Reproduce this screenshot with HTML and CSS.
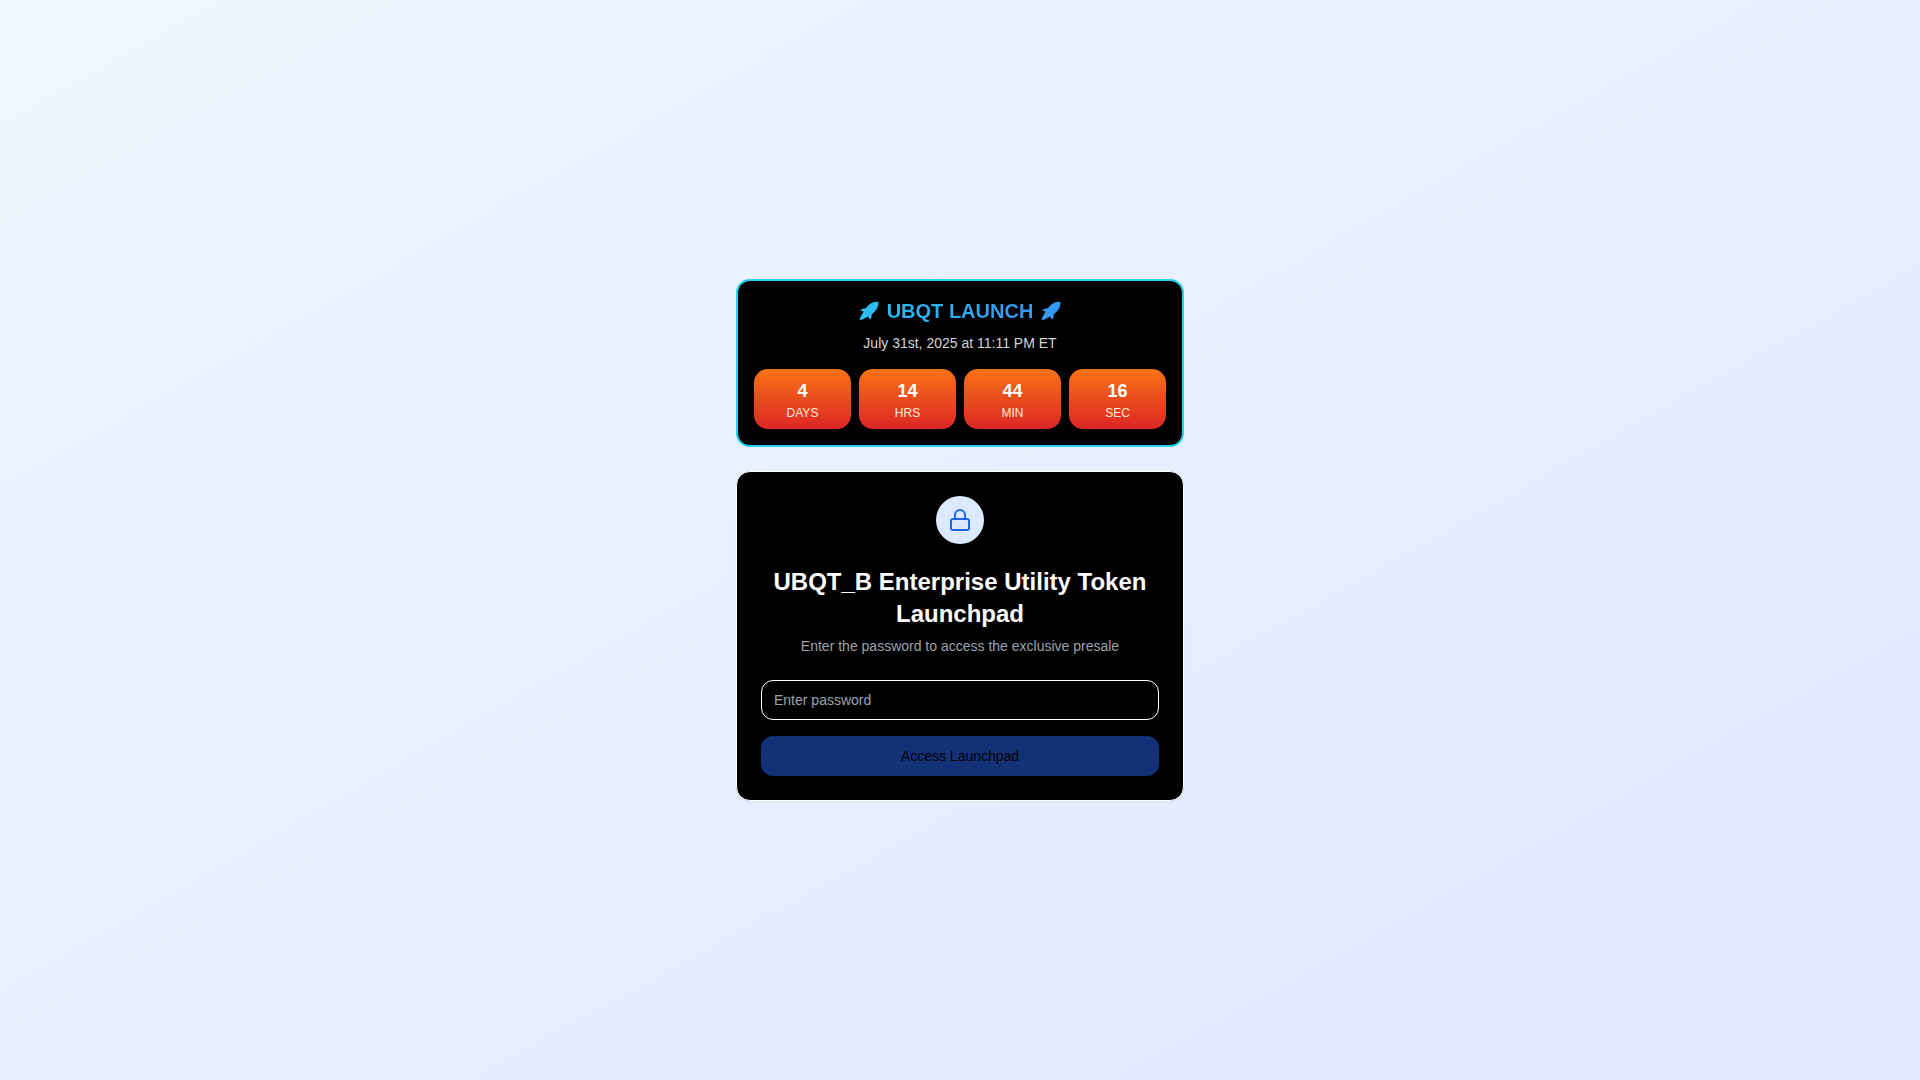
FILE: index.html
```html
<!DOCTYPE html>
<html lang="en">
<head>
    <meta charset="UTF-8">
    <meta name="viewport" content="width=device-width, initial-scale=1.0">
    <title>UBQT_B Launchpad</title>
    <link rel="stylesheet" href="styles.css">
</head>
<body>
    <main class="page">
        <section class="countdown">
            <div class="countdown-heading">
                <svg class="rocket rocket-left" width="20" height="20" viewBox="0 0 20 20" fill="currentColor" aria-hidden="true">
                    <path d="M19.4 .8C15.5 .6 12.2 1.6 9.4 4.2L6.8 7.2C5 7 3 7.8 1.2 9.6L4.6 10.4L3.4 12.8C2 14.6 1 16.6 .6 19.2C3 18.8 5 18 6.8 16.8L9.2 15.6L10.8 18.8C12.4 17 13 15.2 12.6 13.4L15.8 10.6C18.4 8 19.6 4.6 19.4 .8Z"/>
                </svg>
                <h2 class="countdown-title">UBQT LAUNCH</h2>
                <svg class="rocket rocket-right" width="20" height="20" viewBox="0 0 20 20" fill="currentColor" aria-hidden="true">
                    <path d="M19.4 .8C15.5 .6 12.2 1.6 9.4 4.2L6.8 7.2C5 7 3 7.8 1.2 9.6L4.6 10.4L3.4 12.8C2 14.6 1 16.6 .6 19.2C3 18.8 5 18 6.8 16.8L9.2 15.6L10.8 18.8C12.4 17 13 15.2 12.6 13.4L15.8 10.6C18.4 8 19.6 4.6 19.4 .8Z"/>
                </svg>
            </div>
            <p class="countdown-date">July 31st, 2025 at 11:11 PM ET</p>
            <div class="timer">
                <div class="unit">
                    <div class="value">4</div>
                    <div class="label">DAYS</div>
                </div>
                <div class="unit">
                    <div class="value">14</div>
                    <div class="label">HRS</div>
                </div>
                <div class="unit">
                    <div class="value">44</div>
                    <div class="label">MIN</div>
                </div>
                <div class="unit">
                    <div class="value">16</div>
                    <div class="label">SEC</div>
                </div>
            </div>
        </section>

        <section class="card">
            <div class="card-header">
                <div class="lock">
                    <svg width="24" height="24" viewBox="0 0 24 24" fill="none" stroke="currentColor" stroke-width="2" stroke-linecap="round" stroke-linejoin="round" aria-hidden="true">
                        <rect x="3" y="11" width="18" height="11" rx="2" ry="2"></rect>
                        <path d="M7 11V7a5 5 0 0 1 10 0v4"></path>
                    </svg>
                </div>
                <h1 class="card-title">UBQT_B Enterprise Utility Token Launchpad</h1>
                <p class="card-text">Enter the password to access the exclusive presale</p>
            </div>
            <form class="card-form">
                <input class="password" type="password" placeholder="Enter password" aria-label="Enter password">
                <button class="submit" type="submit" disabled>Access Launchpad</button>
            </form>
        </section>
    </main>
</body>
</html>
```
FILE: styles.css
```css
* {
    box-sizing: border-box;
}

body {
    margin: 0;
    font-family: 'Liberation Sans', Arial, sans-serif;
    font-size: 14px;
    line-height: 20px;
    background: linear-gradient(to bottom right, #eff6ff, #e0e7ff);
    min-height: 100vh;
    display: flex;
    align-items: center;
    justify-content: center;
    padding: 16px;
}

h1, h2, p {
    margin: 0;
}

.page {
    width: 100%;
    max-width: 448px;
    display: flex;
    flex-direction: column;
    gap: 24px;
}

.countdown {
    padding: 16px;
    background-color: #000;
    border: 2px solid #22d3ee;
    border-radius: 14px;
    text-align: center;
}

.countdown-heading {
    display: flex;
    align-items: center;
    justify-content: center;
    gap: 8px;
    margin-bottom: 8px;
}

.countdown-title {
    font-size: 20px;
    line-height: 28px;
    font-weight: bold;
    color: transparent;
    background: linear-gradient(to right, #2bb9f1, #3399f5);
    -webkit-background-clip: text;
    background-clip: text;
}

.rocket-left {
    color: #2abef1;
}

.rocket-right {
    color: #3498f5;
}

.countdown-date {
    margin-bottom: 16px;
    color: #d1d5db;
}

.timer {
    display: grid;
    grid-template-columns: repeat(4, 1fr);
    gap: 8px;
}

.unit {
    padding: 8px;
    border-radius: 14px;
    background: linear-gradient(to bottom, #f97316, #dc2626);
}

.value {
    font-size: 18px;
    line-height: 28px;
    font-weight: bold;
    color: #fff;
}

.label {
    font-size: 12px;
    line-height: 16px;
    color: #ffedd5;
}

.card {
    padding: 24px;
    background-color: #000;
    border: 1px solid #fff;
    border-radius: 14px;
    box-shadow: 0 1px 2px rgba(0, 0, 0, 0.05);
}

.card-header {
    display: flex;
    flex-direction: column;
    align-items: center;
    gap: 6px;
    text-align: center;
}

.lock {
    width: 48px;
    height: 48px;
    margin-bottom: 16px;
    display: flex;
    align-items: center;
    justify-content: center;
    border-radius: 50%;
    background-color: #dbeafe;
    color: #2563eb;
}

.card-title {
    font-size: 24px;
    line-height: 32px;
    font-weight: bold;
    color: #fff;
}

.card-text {
    color: #9ca3af;
}

.card-form {
    margin-top: 24px;
    display: flex;
    flex-direction: column;
    gap: 16px;
}

.password,
.submit {
    width: 100%;
    height: 40px;
    border-radius: 12px;
    font: inherit;
}

.password {
    padding: 8px 12px;
    border: 1px solid #fff;
    background-color: #000;
    color: #fff;
}

.password::placeholder {
    color: #9ca3af;
}

.submit {
    border: none;
    background-color: #2563eb;
    color: #000;
}

.submit:disabled {
    opacity: 0.5;
}
```
